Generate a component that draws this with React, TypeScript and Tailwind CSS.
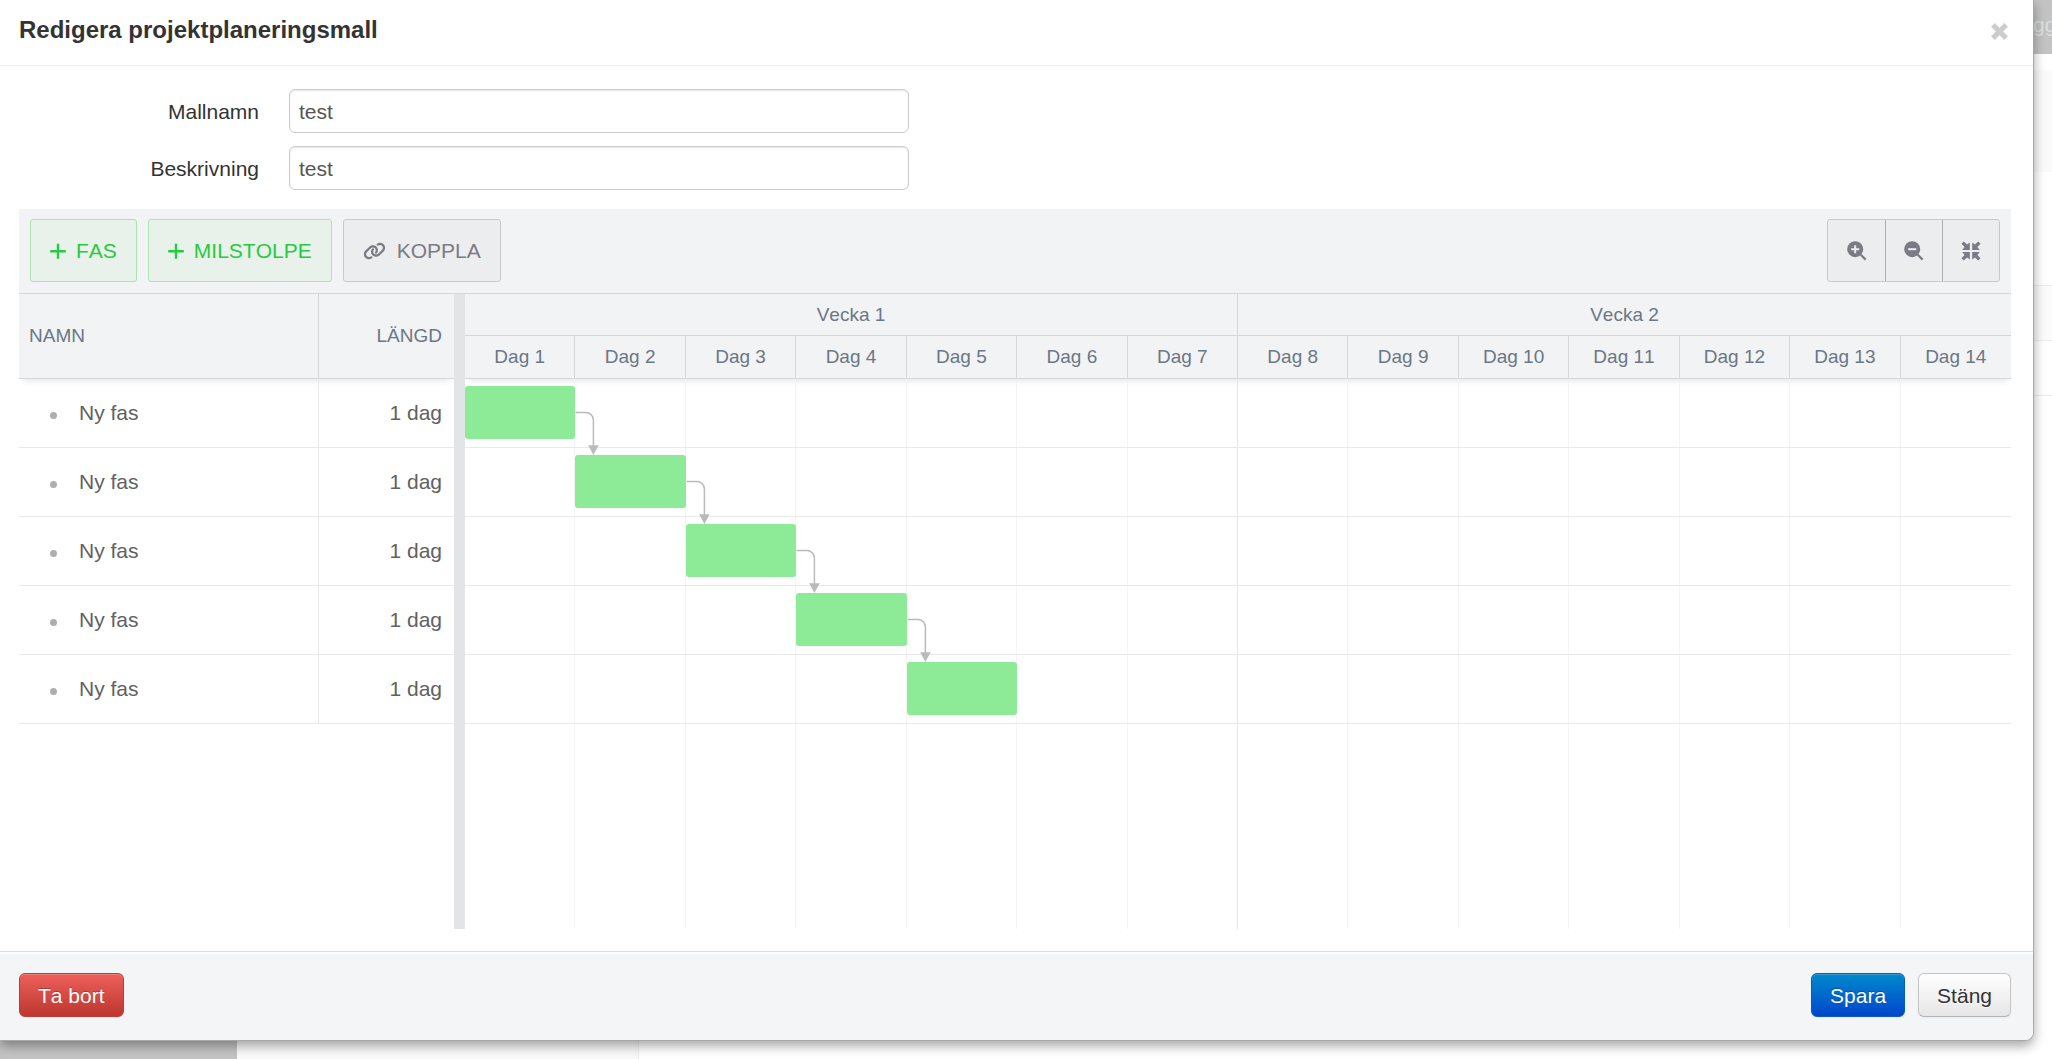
import { useState } from 'react'
import { FaLink } from 'react-icons/fa6'

interface Task {
  id: number
  name: string
  start: number
  days: number
}

const initialTasks: Task[] = [
  { id: 1, name: 'Ny fas', start: 1, days: 1 },
  { id: 2, name: 'Ny fas', start: 2, days: 1 },
  { id: 3, name: 'Ny fas', start: 3, days: 1 },
  { id: 4, name: 'Ny fas', start: 4, days: 1 },
  { id: 5, name: 'Ny fas', start: 5, days: 1 },
]

const weeks = [1, 2]
const days = Array.from({ length: 14 }, (_, i) => i + 1)

const PlusIcon = () => (
  <svg className="w-4 h-4" viewBox="0 0 16 16" fill="none" stroke="currentColor" strokeWidth="2.4" aria-hidden="true">
    <path d="M8 0.8v15M0.2 8.3h15.6" />
  </svg>
)

const ZoomIcon = ({ plus }: { plus?: boolean }) => (
  <svg className="w-5 h-5" viewBox="0 0 20 20" aria-hidden="true">
    <circle cx="8.2" cy="8.2" r="8" fill="currentColor" />
    <path d="M12.8 12.8L18.6 18.6" stroke="currentColor" strokeWidth="2.2" />
    <path d={plus ? 'M4.2 8.2h8M8.2 4.2v8' : 'M4.2 8.2h8'} stroke="#ebedee" strokeWidth="2" />
  </svg>
)

const CompressIcon = () => (
  <svg className="w-5 h-5" viewBox="0 0 20 20" fill="currentColor" aria-hidden="true">
    <path d="M0.4 2.8L2.8 0.4L6 3.6L8.8 1.4V9H1.2L3.6 6Z" />
    <path d="M19.6 2.8L17.2 0.4L14 3.6L11.2 1.4V9H18.8L16.4 6Z" />
    <path d="M0.4 17.2L2.8 19.6L6 16.4L8.8 18.6V11H1.2L3.6 14Z" />
    <path d="M19.6 17.2L17.2 19.6L14 16.4L11.2 18.6V11H18.8L16.4 14Z" />
  </svg>
)

const LinkArrow = () => (
  <svg className="absolute left-full top-[25px] w-6 h-11" viewBox="0 0 24 44" fill="none" aria-hidden="true">
    <path d="M0.5 1.6H11a7.4 7.4 0 0 1 7.4 7.4V36" stroke="#bababa" strokeWidth="1.5" />
    <path d="M13.2 34.2h10.4L18.4 44Z" fill="#bababa" />
  </svg>
)

// The page that lies dimmed behind the dialog
const Backdrop = () => (
  <div className="min-h-screen flex flex-col bg-white" aria-hidden="true">
    <div className="h-[54px] flex justify-end pt-[10px] bg-[#c3c3c3] text-[21px] text-[#dedede] overflow-hidden">
      <span className="w-[19px]">gg</span>
    </div>
    <div className="flex-1 flex">
      <div className="w-[237px] bg-[#c3c3c3]" />
      <div className="w-[402px] bg-[#f9f9f9] border-r border-[#eeeeee]" />
      <div className="flex-1 pt-4">
        <div className="h-[102px] bg-[#fafafa]" />
        <div className="h-[114px] border-b border-[#ececec]" />
        <div className="h-[55px] bg-[#fbfbfb] border-b border-[#ececec]" />
        <div className="h-[55px] border-b border-[#ececec]" />
      </div>
    </div>
  </div>
)

export default function App() {
  const [name, setName] = useState('test')
  const [description, setDescription] = useState('test')
  const [tasks, setTasks] = useState(initialTasks)

  const addTask = (label: string) => {
    setTasks(prev => [...prev, { id: prev.length + 1, name: label, start: Math.min(prev.length + 1, 14), days: 1 }])
  }

  return (
    <div className="relative overflow-hidden font-['Liberation_Sans',Arial,sans-serif] [font-kerning:none] text-[21px] leading-[30px] text-[#333333]">
      <Backdrop />

      <div
        role="dialog"
        aria-labelledby="dialog-title"
        className="absolute top-0 bottom-[18px] left-0 right-[18px] flex flex-col bg-white border-r border-b border-[#a8a8a8] rounded-bl-[2px] rounded-br-[9px] shadow-[0_5px_12px_rgba(0,0,0,0.35)]"
      >
        {/* Header */}
        <header className="flex items-start justify-between pl-[19px] pr-[25px] pt-[15px] pb-[18px] border-b border-[#eeeeee]">
          <h3 id="dialog-title" className="text-2xl leading-[30px] font-bold">Redigera projektplaneringsmall</h3>
          <button aria-label="Stäng dialogruta" className="h-8 flex items-center justify-center text-[#cccccc]">
            <svg className="w-[17px] h-[17px]" viewBox="0 0 16 16" fill="none" stroke="currentColor" strokeWidth="4.8" aria-hidden="true">
              <path d="M1.8 1.8L14.2 14.2M14.2 1.8L1.8 14.2" />
            </svg>
          </button>
        </header>

        <div className="flex-1 flex flex-col pl-[19px] pr-[22px] pb-[22px]">
          {/* Form */}
          <form className="flex flex-col gap-[13px] pt-[23px] pb-[19px]">
            <div className="flex items-center gap-[30px]">
              <label htmlFor="name" className="w-[240px] pt-px text-right">Mallnamn</label>
              <input
                id="name"
                value={name}
                onChange={e => setName(e.target.value)}
                className="w-[620px] h-11 px-[9px] pt-px border border-[#cccccc] rounded-md bg-white text-[#555555] shadow-[inset_0_1px_2px_rgba(0,0,0,0.1)]"
              />
            </div>
            <div className="flex items-center gap-[30px]">
              <label htmlFor="description" className="w-[240px] pt-px text-right">Beskrivning</label>
              <input
                id="description"
                value={description}
                onChange={e => setDescription(e.target.value)}
                className="w-[620px] h-11 px-[9px] pt-px border border-[#cccccc] rounded-md bg-white text-[#555555] shadow-[inset_0_1px_2px_rgba(0,0,0,0.1)]"
              />
            </div>
          </form>

          {/* Toolbar */}
          <div className="flex items-center gap-[11px] px-[11px] pt-[10px] pb-[11px] bg-[#f2f3f5] border-b border-[#d5d7da]">
            <button
              onClick={() => addTask('Ny fas')}
              className="h-[63px] px-[19px] flex items-center gap-[10px] border border-[#a9e4b1] rounded-[3px] bg-[#e9f1eb] text-[#28ca42]"
            >
              <PlusIcon />
              FAS
            </button>
            <button
              onClick={() => addTask('Ny milstolpe')}
              className="h-[63px] px-[19px] flex items-center gap-[10px] border border-[#a9e4b1] rounded-[3px] bg-[#e9f1eb] text-[#28ca42]"
            >
              <PlusIcon />
              MILSTOLPE
            </button>
            <button className="h-[63px] px-[19px] flex items-center gap-[11px] border border-[#c8c9cc] rounded-[3px] bg-[#ebedee] text-[#7b7b87]">
              <FaLink className="w-[23px] h-[18px]" />
              KOPPLA
            </button>

            <div className="ml-auto h-[63px] flex border border-[#c8c9cc] rounded-[3px] bg-[#ebedee] text-[#7b7b87] divide-x divide-[#aeafb5]">
              <button aria-label="Zooma in" className="w-[58px] flex items-center justify-center"><ZoomIcon plus /></button>
              <button aria-label="Zooma ut" className="w-[57px] flex items-center justify-center"><ZoomIcon /></button>
              <button aria-label="Anpassa" className="w-14 flex items-center justify-center"><CompressIcon /></button>
            </div>
          </div>

          {/* Gantt */}
          <div className="flex-1 flex">
            <div className="w-[435px]">
              <table className="w-full table-fixed border-separate border-spacing-0">
                <thead className="text-[19px] text-[#6b7785] shadow-[0_6px_6px_-4px_rgba(0,0,0,0.1)]">
                  <tr className="h-[85px] bg-[#f2f3f5]">
                    <th className="w-[300px] pl-[10px] text-left font-normal border-r border-b border-[#d5d7da]">NAMN</th>
                    <th className="pr-3 text-right font-normal border-b border-[#d5d7da]">LÄNGD</th>
                  </tr>
                </thead>
                <tbody className="text-[#616161]">
                  {tasks.map(task => (
                    <tr key={task.id} className="h-[69px]">
                      <td className="pl-[31px] border-r border-b border-[#e9e9e9]">
                        <div className="flex items-center gap-[22px]">
                          <span className="w-[7px] h-[7px] mt-1 rounded-full bg-[#aeaeae]" />
                          {task.name}
                        </div>
                      </td>
                      <td className="pr-3 text-right border-b border-[#e9e9e9]">{task.days} dag</td>
                    </tr>
                  ))}
                </tbody>
              </table>
            </div>

            <div className="w-[11px] bg-[#e3e4e5]" />

            <div className="flex-1 flex flex-col">
              <div className="text-[19px] text-center text-[#6b7785] bg-[#f2f3f5] border-b border-[#d5d7da] shadow-[0_6px_6px_-4px_rgba(0,0,0,0.1)]">
                <div className="h-[42px] grid grid-cols-2 items-stretch border-b border-[#d5d7da]">
                  {weeks.map(week => (
                    <div key={week} className="flex items-center justify-center border-r border-[#d5d7da] last:border-r-0">Vecka {week}</div>
                  ))}
                </div>
                <div className="h-[42px] grid grid-cols-14">
                  {days.map(day => (
                    <div key={day} className="flex items-center justify-center border-r border-[#d5d7da] last:border-r-0">Dag {day}</div>
                  ))}
                </div>
              </div>

              <div className="relative flex-1">
                <div className="absolute inset-0 grid grid-cols-14">
                  {days.map(day => (
                    <div key={day} className={day === 7 ? 'border-r border-[#e6e6e6]' : 'border-r border-[#f4f4f4] last:border-r-0'} />
                  ))}
                </div>
                {tasks.map((task, i) => (
                  <div key={task.id} className="relative h-[69px] pt-[7px] grid grid-cols-14 border-b border-[#e9e9e9]">
                    <div
                      className="relative h-[53px] rounded-[3px] bg-[#8deb98]"
                      style={{ gridColumn: `${task.start} / span ${task.days}` }}
                    >
                      {i < tasks.length - 1 && <LinkArrow />}
                    </div>
                  </div>
                ))}
              </div>
            </div>
          </div>
        </div>

        {/* Footer */}
        <footer className="flex items-center pl-[19px] pr-[22px] pt-[21px] pb-[23px] bg-[#f3f5f7] border-t border-[#dddddd] rounded-br-[8px] shadow-[inset_0_2px_0_#ffffff]">
          <button className="h-11 px-[18px] pt-px rounded-md border border-[#b5403b] bg-linear-to-b from-[#ee5f5b] to-[#bd362f] text-white [text-shadow:0_-1px_0_rgba(0,0,0,0.25)] shadow-[inset_0_1px_0_rgba(255,255,255,0.2),0_1px_2px_rgba(0,0,0,0.05)]">
            Ta bort
          </button>
          <div className="ml-auto flex gap-[13px]">
            <button className="h-11 px-[18px] pt-px rounded-md border border-[#0a5cb8] bg-linear-to-b from-[#0088cc] to-[#0044cc] text-white [text-shadow:0_-1px_0_rgba(0,0,0,0.25)] shadow-[inset_0_1px_0_rgba(255,255,255,0.2),0_1px_2px_rgba(0,0,0,0.05)]">
              Spara
            </button>
            <button className="h-11 px-[18px] pt-px rounded-md border border-[#c5c5c5] border-b-[#b3b3b3] bg-linear-to-b from-white to-[#e6e6e6] [text-shadow:0_1px_1px_rgba(255,255,255,0.75)] shadow-[inset_0_1px_0_rgba(255,255,255,0.2),0_1px_2px_rgba(0,0,0,0.05)]">
              Stäng
            </button>
          </div>
        </footer>
      </div>
    </div>
  )
}
